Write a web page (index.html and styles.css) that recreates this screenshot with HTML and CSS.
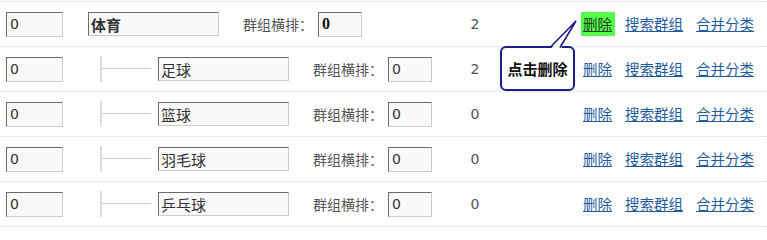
FILE: index.html
```html
<!DOCTYPE html>
<html lang="zh">
<head>
<meta charset="utf-8">
<title>群组分类</title>
<link rel="stylesheet" href="styles.css">
</head>
<body>
<div class="list">
  <div class="row">
    <div class="main">
      <input class="sort" type="text" value="0">
      <input class="name name-top" type="text" value="体育">
      <span class="label">群组横排：</span>
      <input class="cols cols-bold" type="text" value="0">
    </div>
    <div class="count">2</div>
    <div class="actions">
      <a href="#" class="link del hl">删除</a>
      <a href="#" class="link">搜索群组</a>
      <a href="#" class="link">合并分类</a>
    </div>
  </div>
  <div class="row">
    <div class="main">
      <input class="sort" type="text" value="0">
      <span class="tree"></span>
      <input class="name" type="text" value="足球">
      <span class="label">群组横排：</span>
      <input class="cols" type="text" value="0">
    </div>
    <div class="count">2</div>
    <div class="actions">
      <a href="#" class="link del">删除</a>
      <a href="#" class="link">搜索群组</a>
      <a href="#" class="link">合并分类</a>
    </div>
  </div>
  <div class="row">
    <div class="main">
      <input class="sort" type="text" value="0">
      <span class="tree"></span>
      <input class="name" type="text" value="篮球">
      <span class="label">群组横排：</span>
      <input class="cols" type="text" value="0">
    </div>
    <div class="count">0</div>
    <div class="actions">
      <a href="#" class="link del">删除</a>
      <a href="#" class="link">搜索群组</a>
      <a href="#" class="link">合并分类</a>
    </div>
  </div>
  <div class="row">
    <div class="main">
      <input class="sort" type="text" value="0">
      <span class="tree"></span>
      <input class="name" type="text" value="羽毛球">
      <span class="label">群组横排：</span>
      <input class="cols" type="text" value="0">
    </div>
    <div class="count">0</div>
    <div class="actions">
      <a href="#" class="link del">删除</a>
      <a href="#" class="link">搜索群组</a>
      <a href="#" class="link">合并分类</a>
    </div>
  </div>
  <div class="row">
    <div class="main">
      <input class="sort" type="text" value="0">
      <span class="tree"></span>
      <input class="name" type="text" value="乒乓球">
      <span class="label">群组横排：</span>
      <input class="cols" type="text" value="0">
    </div>
    <div class="count">0</div>
    <div class="actions">
      <a href="#" class="link del">删除</a>
      <a href="#" class="link">搜索群组</a>
      <a href="#" class="link">合并分类</a>
    </div>
  </div>

  <div class="callout">
    <div class="callout-box">点击删除</div>
    <svg class="callout-tail" width="32" height="32" viewBox="0 0 32 32">
      <polygon points="3,29.5 28,2 13,29.5" fill="#ffffff"/>
      <polyline points="2,28.5 28,2 12,28.5" fill="none" stroke="#1c1c86" stroke-width="1.6" stroke-linejoin="miter"/>
    </svg>
  </div>
</div>
</body>
</html>
```

FILE: styles.css
```css
html, body {
  margin: 0;
  padding: 0;
  background: #ffffff;
}

body {
  font-family: "DejaVu Sans", "Noto Sans CJK SC", sans-serif;
  font-size: 14px;
  color: #555555;
}

.list {
  position: relative;
  margin-top: 1px;
  border-top: 1px dotted #c9dcee;
  width: 767px;
}

.row {
  display: flex;
  align-items: center;
  height: 44px;
  border-bottom: 1px dotted #c9dcee;
}

.main {
  flex: none;
  width: 455px;
  display: flex;
  align-items: center;
}

input {
  box-sizing: border-box;
  height: 25px;
  margin: 0;
  padding: 0 3px;
  border: 1px solid;
  border-color: #6b6b6b #cccccc #cccccc #6b6b6b;
  background: #f9f9f9;
  color: #333333;
  font-family: "DejaVu Sans", "Noto Sans CJK SC", sans-serif;
  font-size: 14px;
  outline: none;
}

.sort {
  width: 57px;
  margin-left: 6px;
}

.name {
  width: 131px;
  height: 24px;
  padding: 0 2px;
  font-family: "Noto Sans CJK SC", sans-serif;
  font-size: 15px;
  color: #333333;
  margin-left: 7px;
}

.name-top {
  margin-left: 25px;
  font-weight: bold;
}

.tree {
  flex: none;
  position: relative;
  width: 49px;
  height: 26px;
  margin-left: 37px;
  border-left: 2px solid #dddddd;
}

.tree::after {
  content: "";
  position: absolute;
  left: 0;
  right: 0;
  top: 12px;
  height: 1px;
  background: #d0d0d0;
}

.label {
  margin-left: 24px;
  font-family: "Noto Sans CJK SC", sans-serif;
  font-size: 14px;
  color: #555555;
  width: 70px;
  white-space: nowrap;
}

.cols {
  width: 44px;
  margin-left: 5px;
}

.cols-bold {
  font-family: "Liberation Serif", serif;
  font-weight: bold;
  font-size: 16px;
  color: #111111;
}

.count {
  flex: none;
  width: 40px;
  text-align: center;
  font-size: 14px;
  color: #555555;
}

.actions {
  display: flex;
  align-items: center;
  gap: 13px;
  margin-left: 88px;
}

.link {
  font-family: "Noto Sans CJK SC", sans-serif;
  font-size: 14.5px;
  line-height: 24px;
  color: #1f5c9e;
  text-decoration: underline;
  white-space: nowrap;
}

.hl {
  background: #55ff4c;
  color: #1a3a1a;
  padding: 0 3px 0 2px;
  margin-left: -2px;
  margin-right: -3px;
}

.callout {
  position: absolute;
  left: 500px;
  top: 17px;
  width: 80px;
  height: 74px;
}

.callout-box {
  position: absolute;
  left: 0;
  top: 27px;
  box-sizing: border-box;
  width: 75px;
  height: 45px;
  border: 2px solid #1c1c86;
  border-radius: 6px;
  background: #ffffff;
  display: flex;
  align-items: center;
  justify-content: center;
  font-family: "Noto Sans CJK SC", sans-serif;
  font-weight: bold;
  font-size: 15px;
  color: #111111;
  white-space: nowrap;
}

.callout-tail {
  position: absolute;
  left: 48px;
  top: 0;
}
```
